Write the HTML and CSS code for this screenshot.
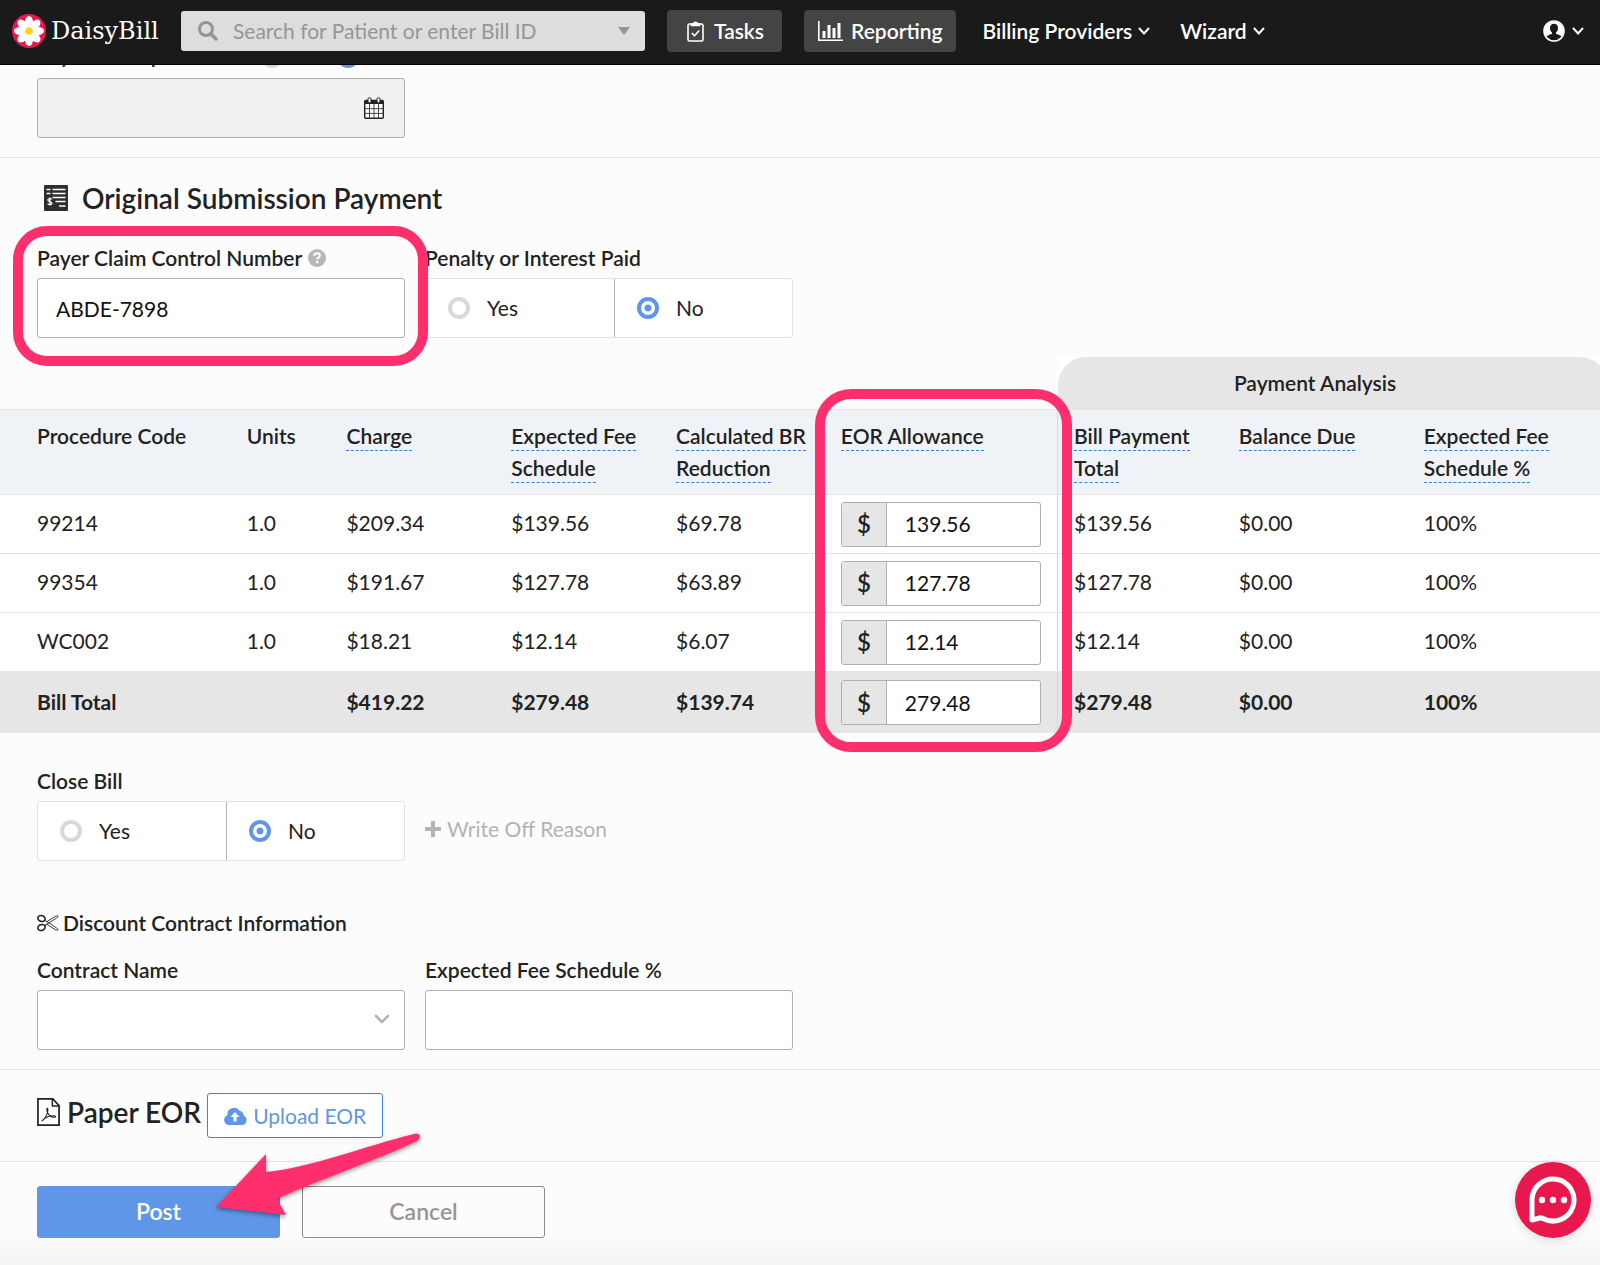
FILE: index.html
```html
<!DOCTYPE html>
<html lang="en">
<head>
    <meta charset="UTF-8">
    <meta name="viewport" content="width=device-width, initial-scale=1.0">
    <title>DaisyBill</title>
    <link rel="stylesheet" href="styles.css">
</head>
<body>

    <header class="navbar">
        <a class="brand" href="#">
            <svg class="brand-logo" viewBox="0 0 34 34" aria-hidden="true">
                <circle cx="17" cy="17" r="17" fill="#e8184c"/>
                <g fill="#fff">
                    <ellipse cx="17" cy="8" rx="4" ry="6"/>
                    <ellipse cx="17" cy="8" rx="4" ry="6" transform="rotate(45 17 17)"/>
                    <ellipse cx="17" cy="8" rx="4" ry="6" transform="rotate(90 17 17)"/>
                    <ellipse cx="17" cy="8" rx="4" ry="6" transform="rotate(135 17 17)"/>
                    <ellipse cx="17" cy="8" rx="4" ry="6" transform="rotate(180 17 17)"/>
                    <ellipse cx="17" cy="8" rx="4" ry="6" transform="rotate(225 17 17)"/>
                    <ellipse cx="17" cy="8" rx="4" ry="6" transform="rotate(270 17 17)"/>
                    <ellipse cx="17" cy="8" rx="4" ry="6" transform="rotate(315 17 17)"/>
                </g>
                <circle cx="17" cy="17" r="3.500" fill="#ffd400"/>
            </svg>
            <span>DaisyBill</span>
        </a>

        <div class="search">
            <svg class="search-icon" viewBox="0 0 20 20" aria-hidden="true">
                <circle cx="8" cy="8" r="6.500" fill="none" stroke="#949494" stroke-width="3"/>
                <path d="M13 13l5 5" stroke="#949494" stroke-width="3.400" stroke-linecap="round"/>
            </svg>
            <input type="text" placeholder="Search for Patient or enter Bill ID" aria-label="Search">
            <svg class="search-caret" viewBox="0 0 12 8" aria-hidden="true"><path d="M0 0h12L6 8z" fill="#949494"/></svg>
        </div>

        <nav class="menu">
            <a class="menu-button" href="#">
                <svg width="17" height="21" viewBox="0 0 17 21" fill="none" stroke="#fff" stroke-width="1.600" aria-hidden="true">
                    <rect x="1" y="3" width="15" height="17" rx="1.500"/>
                    <path d="M4.500 4.500V3h2.200a1.800 1.800 0 0 1 3.600 0h2.200v1.500z" fill="#fff"/>
                    <path d="M4.800 12l2.700 2.800 4.700-5.300"/>
                </svg>
                Tasks
            </a>
            <a class="menu-button" href="#">
                <svg width="25" height="20" viewBox="0 0 25 20" fill="#fff" aria-hidden="true">
                    <path d="M0 0h1.600v18.400H25V20H0zM4.500 10h3v7h-3zM9.500 4h3v13h-3zM14.500 7h3v10h-3zM19.500 2h3v15h-3z"/>
                </svg>
                Reporting
            </a>
            <a class="menu-link" href="#">
                Billing Providers
                <svg class="chevron" viewBox="0 0 12 8" aria-hidden="true"><path d="M1 1l5 5.500 5-5.500"/></svg>
            </a>
            <a class="menu-link" href="#">
                Wizard
                <svg class="chevron" viewBox="0 0 12 8" aria-hidden="true"><path d="M1 1l5 5.500 5-5.500"/></svg>
            </a>
        </nav>

        <button class="user-menu" type="button" aria-label="Account">
            <svg width="22" height="22" viewBox="0 0 22 22" aria-hidden="true">
                <circle cx="11" cy="11" r="10" fill="none" stroke="#fff" stroke-width="1.600"/>
                <path d="M1.500 11a9.500 9.500 0 0 1 19 0c0 2-.8 4-2 5.500-1.500-1.500-3.500-1.700-4.500-2.500h-6c-1 .8-3 1-4.500 2.500C2.300 15 1.500 13 1.500 11z" fill="#fff"/>
                <path d="M11 3.800c-2.600 0-4 1.800-4 4.200 0 2 .8 3.700 2 4.600v1.400c.5.900 3.500.9 4 0v-1.400c1.200-.9 2-2.600 2-4.600 0-2.400-1.400-4.200-4-4.200z" fill="#1a1a1a"/>
            </svg>
            <svg class="chevron" viewBox="0 0 12 8" aria-hidden="true"><path d="M1 1l5 5.500 5-5.500"/></svg>
        </button>
    </header>

    <main>
        <section class="section section-first">
            <div class="deposit-row">
                <label for="deposit-date">Payment Deposited</label>
                <label class="inline-radio"><input type="radio" name="deposited"> <span>Yes</span></label>
                <label class="inline-radio"><input type="radio" name="deposited" checked> <span>No</span></label>
            </div>
            <div class="date-box">
                <input class="text-input" id="deposit-date" type="text" disabled>
                <svg class="date-icon" viewBox="0 0 20 22" aria-hidden="true">
                    <rect x="0.700" y="3.500" width="18.600" height="17.800" rx="1" fill="#fff" stroke="#222" stroke-width="1.400"/>
                    <path d="M1 3.500h18V7H1z" fill="#222"/>
                    <path d="M5.500 7v14M10 7v14M14.500 7v14M1 11.700h18M1 16.400h18" stroke="#444" stroke-width="1"/>
                    <rect x="4" y="0.700" width="3" height="5" rx="1.400" fill="#fff" stroke="#222"/>
                    <rect x="13" y="0.700" width="3" height="5" rx="1.400" fill="#fff" stroke="#222"/>
                </svg>
            </div>
        </section>

        <section class="section section-payment">
            <h2 class="title">
                <svg width="24" height="26" viewBox="0 0 24 26" aria-hidden="true">
                    <rect width="24" height="26" rx="1" fill="#2e2e2e"/>
                    <path d="M2.500 4.500h4M8.500 4.500h13M2.500 8.500h4M8.500 8.500h13M8.500 12.500h13M11.500 16.500h10M15 21h6.500" stroke="#fff" stroke-width="1.700"/>
                    <path d="M7.800 14.300C7 13.200 3.800 13.300 3.800 15c0 2 4.200 1.200 4.200 3.200 0 1.700-3.400 1.800-4.400.5M5.900 12.500v8" fill="none" stroke="#fff" stroke-width="1.200"/>
                </svg>
                Original Submission Payment
            </h2>

            <div class="fields">
                <div class="field ringed">
                    <div class="label-row">
                        <label for="claim-number">Payer Claim Control Number</label>
                        <svg width="18" height="18" viewBox="0 0 18 18" aria-hidden="true">
                            <circle cx="9" cy="9" r="9" fill="#b8b8b8"/>
                            <path d="M6.200 6.800c0-3.600 5.700-3.300 5.700-.3 0 2-2.700 2-2.700 4" fill="none" stroke="#fff" stroke-width="2"/>
                            <rect x="8" y="12" width="2.300" height="2.300" fill="#fff"/>
                        </svg>
                    </div>
                    <input class="text-input" id="claim-number" type="text" value="ABDE-7898">
                </div>
                <fieldset class="field">
                    <legend>Penalty or Interest Paid</legend>
                    <div class="choice">
                        <label><input type="radio" name="penalty"> Yes</label>
                        <label><input type="radio" name="penalty" checked> No</label>
                    </div>
                </fieldset>
            </div>

            <table class="codes">
                <colgroup>
                    <col class="col-code">
                    <col class="col-units">
                    <col class="col-money">
                    <col class="col-money">
                    <col class="col-money">
                    <col class="col-eor">
                    <col class="col-money">
                    <col class="col-balance">
                    <col>
                </colgroup>
                <thead>
                    <tr class="group-row">
                        <td colspan="6"></td>
                        <th class="group" colspan="3" scope="colgroup">Payment Analysis</th>
                    </tr>
                    <tr class="head-row">
                        <th scope="col">Procedure Code</th>
                        <th scope="col">Units</th>
                        <th scope="col"><span class="tip">Charge</span></th>
                        <th scope="col"><span class="tip">Expected Fee<br>Schedule</span></th>
                        <th scope="col"><span class="tip">Calculated BR<br>Reduction</span></th>
                        <th class="eor" scope="col"><span class="tip">EOR Allowance</span></th>
                        <th scope="col"><span class="tip">Bill Payment<br>Total</span></th>
                        <th scope="col"><span class="tip">Balance Due</span></th>
                        <th scope="col"><span class="tip">Expected Fee<br>Schedule %</span></th>
                    </tr>
                </thead>
                <tbody>
                    <tr>
                        <td>99214</td>
                        <td>1.0</td>
                        <td>$209.34</td>
                        <td>$139.56</td>
                        <td>$69.78</td>
                        <td class="eor"><label class="money"><span>$</span><input type="text" value="139.56" aria-label="EOR allowance 99214"></label></td>
                        <td>$139.56</td>
                        <td>$0.00</td>
                        <td>100%</td>
                    </tr>
                    <tr>
                        <td>99354</td>
                        <td>1.0</td>
                        <td>$191.67</td>
                        <td>$127.78</td>
                        <td>$63.89</td>
                        <td class="eor"><label class="money"><span>$</span><input type="text" value="127.78" aria-label="EOR allowance 99354"></label></td>
                        <td>$127.78</td>
                        <td>$0.00</td>
                        <td>100%</td>
                    </tr>
                    <tr>
                        <td>WC002</td>
                        <td>1.0</td>
                        <td>$18.21</td>
                        <td>$12.14</td>
                        <td>$6.07</td>
                        <td class="eor"><label class="money"><span>$</span><input type="text" value="12.14" aria-label="EOR allowance WC002"></label></td>
                        <td>$12.14</td>
                        <td>$0.00</td>
                        <td>100%</td>
                    </tr>
                </tbody>
                <tfoot>
                    <tr>
                        <td>Bill Total</td>
                        <td></td>
                        <td>$419.22</td>
                        <td>$279.48</td>
                        <td>$139.74</td>
                        <td class="eor"><label class="money"><span>$</span><input type="text" value="279.48" aria-label="EOR allowance total"></label></td>
                        <td>$279.48</td>
                        <td>$0.00</td>
                        <td>100%</td>
                    </tr>
                </tfoot>
            </table>

            <div class="fields fields-close">
                <fieldset class="field">
                    <legend>Close Bill</legend>
                    <div class="choice">
                        <label><input type="radio" name="close"> Yes</label>
                        <label><input type="radio" name="close" checked> No</label>
                    </div>
                </fieldset>
                <a class="write-off" href="#">
                    <svg width="16" height="16" viewBox="0 0 16 16" aria-hidden="true"><path d="M6 0h4v6h6v4h-6v6H6v-6H0V6h6z" fill="#b3b3b3"/></svg>
                    Write Off Reason
                </a>
            </div>

            <h3 class="subtitle">
                <svg width="22" height="18" viewBox="0 0 22 18" fill="none" stroke="#222" aria-hidden="true">
                    <ellipse cx="4.500" cy="4.500" rx="3.700" ry="2.900" stroke-width="1.600" transform="rotate(20 4.500 4.500)"/>
                    <ellipse cx="4.500" cy="13.500" rx="3.700" ry="2.900" stroke-width="1.600" transform="rotate(-20 4.500 13.500)"/>
                    <path d="M8 6.500l3.500 2L19.500 14c1 .7 2 1.500 1.500 2-1 .4-2 0-3-.5L9.500 10 8 11.500M8 11.500L19.500 4c1-.7 2-1.500 1.500-2-1-.4-2 0-3 .5L9.500 8" stroke-width="0.900"/>
                </svg>
                Discount Contract Information
            </h3>

            <div class="fields">
                <div class="field">
                    <div class="label-row"><label for="contract">Contract Name</label></div>
                    <div class="select-box">
                        <select class="text-input" id="contract"><option></option></select>
                        <svg viewBox="0 0 16 10" aria-hidden="true"><path d="M2 2l6 6 6-6" fill="none" stroke="#b3b3b3" stroke-width="2.600" stroke-linecap="round"/></svg>
                    </div>
                </div>
                <div class="field">
                    <div class="label-row"><label for="fee-schedule">Expected Fee Schedule %</label></div>
                    <input class="text-input" id="fee-schedule" type="text">
                </div>
            </div>
        </section>

        <section class="section section-paper">
            <h2 class="title">
                <svg width="23" height="28" viewBox="0 0 24 30" preserveAspectRatio="none" fill="none" stroke="#222" aria-hidden="true">
                    <path d="M1 1h15.500L23 8v21H1z" stroke-width="1.800"/>
                    <path d="M16 1v7.500h7" stroke-width="1.500"/>
                    <path d="M5 24.500c2-1 4-3.500 5.500-7.500 1-3 1.200-6 .3-6-1 0-.8 2.500.5 5 1.500 3 4.500 5 7.500 4.500 1.500-.5.500-1.500-1.500-1.500-3 0-8 1.500-11 4.500-1 1-1.500 1.200-1.300 1z" stroke-width="1.100"/>
                </svg>
                Paper EOR
            </h2>
            <button class="btn-upload" type="button">
                <svg width="23" height="18" viewBox="0 0 23 18" aria-hidden="true">
                    <path d="M5 18a5 5 0 0 1-1.500-9.700A6.500 6.500 0 0 1 15.500 4a4 4 0 0 1 4 4.600A4.900 4.900 0 0 1 18 18z" fill="#5f96e8"/>
                    <path d="M11 5l4.500 5h-3v4.500h-3V10h-3z" fill="#fff"/>
                </svg>
                Upload EOR
            </button>
        </section>

        <div class="actions">
            <button class="btn-post" type="button">Post</button>
            <button class="btn-cancel" type="button">Cancel</button>
            <svg class="arrow" viewBox="0 0 206 84" aria-hidden="true">
                <path d="M1 74L51 21v18C95 35 150 13 199 1c6-2 8 4 3 7C160 28 105 46 62 66l9 16z" fill="#ff2e6d"/>
            </svg>
        </div>
    </main>

    <button class="chat" type="button" aria-label="Chat">
        <svg width="50" height="50" viewBox="0 0 50 50" aria-hidden="true">
            <path d="M4 45V25a21 21 0 1 1 11 18.500c-2-1-3-1-5 0z" fill="none" stroke="#fff" stroke-width="5" stroke-linejoin="round"/>
            <circle cx="14" cy="25" r="3.200" fill="#fff"/>
            <circle cx="25" cy="25" r="3.200" fill="#fff"/>
            <circle cx="36" cy="25" r="3.200" fill="#fff"/>
        </svg>
    </button>

</body>
</html>
```
FILE: styles.css
```css
* {
    box-sizing: border-box;
}

body {
    margin: 0;
    background-color: #fcfcfc;
    color: #222;
    font-family: Lato, "Liberation Sans", sans-serif;
    font-size: 21px;
    line-height: 24px;
    overflow-x: hidden;
}

a {
    text-decoration: none;
}

button,
input,
select {
    font: inherit;
}

svg {
    flex: none;
}

/* top bar */

.navbar {
    position: fixed;
    top: 0;
    left: 0;
    right: 0;
    z-index: 10;
    display: flex;
    align-items: center;
    height: 65px;
    padding: 0 16px 2px 12px;
    background-color: #1a1a1a;
    border-bottom: 1px solid #000;
}

.brand {
    display: flex;
    align-items: center;
    gap: 5px;
    width: 169px;
    color: #fff;
    font-family: "DejaVu Serif", serif;
    font-size: 24px;
}

.brand-logo {
    width: 34px;
    height: 34px;
}

.search {
    display: flex;
    align-items: center;
    gap: 15px;
    width: 464px;
    height: 40px;
    padding: 0 15px 0 17px;
    background-color: #ddd;
    border-radius: 3px;
}

.search-icon {
    width: 20px;
    height: 20px;
}

.search-caret {
    width: 12px;
    height: 8px;
}

.search input {
    flex: 1;
    min-width: 0;
    padding: 0;
    border: none;
    background: none;
}

.search input::placeholder {
    color: #969696;
}

.menu {
    display: flex;
    align-items: center;
    gap: 22px;
    margin-left: 22px;
    font-weight: 600;
}

.menu a {
    display: flex;
    align-items: center;
    color: #fff;
    white-space: nowrap;
}

.menu-button {
    gap: 8px;
    height: 42px;
    padding: 0 14px;
    background-color: #444;
    border-radius: 4px;
}

.menu-button:first-child {
    gap: 10px;
    padding: 0 18px 0 20px;
}

.menu-link {
    gap: 6px;
    padding: 0 4px;
}

.chevron {
    width: 12px;
    height: 8px;
    fill: none;
    stroke: #fff;
    stroke-width: 2;
}

.user-menu {
    display: flex;
    align-items: center;
    gap: 7px;
    margin-left: auto;
    padding: 0;
    border: none;
    background: none;
}

/* sections */

.section {
    border-bottom: 1px solid #e3e3e3;
}

.section-first {
    padding: 46px 37px 19px;
}

.section-payment {
    padding: 24px 0 19px;
}

.section-paper {
    display: flex;
    align-items: flex-start;
    gap: 6px;
    padding: 23px 37px;
}

.title {
    display: flex;
    align-items: center;
    gap: 14px;
    margin: 0;
    font-size: 28px;
    font-weight: 600;
    line-height: 32px;
}

.section-payment .title {
    padding: 0 44px;
    margin-bottom: 32px;
}

.section-paper .title {
    gap: 7px;
    line-height: 38px;
}

.subtitle {
    display: flex;
    align-items: center;
    gap: 4px;
    margin: 50px 37px 23px;
    font-size: 21px;
    font-weight: 600;
}

/* form fields */

.fields {
    display: flex;
    gap: 20px;
    padding: 0 37px;
}

.field {
    width: 368px;
    min-width: 0;
    margin: 0;
    padding: 0;
    border: none;
}

.field legend,
.label-row {
    display: flex;
    align-items: center;
    gap: 6px;
    margin-bottom: 8px;
    padding: 0;
    font-weight: 600;
    white-space: nowrap;
}

.text-input {
    display: block;
    width: 100%;
    height: 60px;
    padding: 0 18px;
    border: 1px solid #b0b0b0;
    border-radius: 3px;
    background-color: #fff;
    color: #111;
}

.text-input:disabled {
    background-color: #f1f1f1;
}

input[type="radio"] {
    appearance: none;
    width: 22px;
    height: 22px;
    margin: 0;
    border: 4px solid #d8d8d8;
    border-radius: 50%;
    background-color: #fff;
}

input[type="radio"]:checked {
    border-color: #5f96e8;
    background: radial-gradient(circle, #5f96e8 3px, #fff 4px);
}

.deposit-row {
    display: flex;
    align-items: flex-start;
    height: 24px;
    margin-bottom: 8px;
    line-height: 18px;
}

.deposit-row label:first-child {
    width: 224px;
    font-weight: 600;
}

.inline-radio {
    display: flex;
    align-items: flex-start;
    gap: 12px;
    width: 76px;
}

.date-box,
.select-box {
    position: relative;
    width: 368px;
}

.date-icon {
    position: absolute;
    top: 19px;
    right: 21px;
    width: 20px;
    height: 22px;
}

.select-box select {
    appearance: none;
}

.select-box svg {
    position: absolute;
    top: 24px;
    right: 15px;
    width: 16px;
    height: 10px;
}

.choice {
    display: flex;
    height: 60px;
    background-color: #fff;
    border: 1px solid #e3e3e3;
    border-radius: 3px;
}

.choice label {
    display: flex;
    align-items: center;
    gap: 17px;
    flex: 1;
    padding-left: 22px;
}

.choice label:first-child {
    flex: none;
    width: 189px;
    border-right: 1px solid #b0b0b0;
}

.fields-close {
    align-items: flex-end;
    margin-top: 36px;
}

.write-off {
    display: flex;
    align-items: center;
    gap: 6px;
    height: 60px;
    padding-bottom: 4px;
    color: #b3b3b3;
}

/* highlight ring */

.ringed,
.head-row .eor {
    position: relative;
}

.ringed::after,
.head-row .eor::after {
    content: "";
    position: absolute;
    z-index: 2;
    border: 10px solid #ff2e6d;
    pointer-events: none;
}

.ringed::after {
    inset: -20px -23px -28px -24px;
    border-radius: 34px;
}

.head-row .eor::after {
    top: -21px;
    left: -10px;
    right: -15px;
    height: 343px;
    border-radius: 36px;
}

/* procedure table */

.codes {
    width: calc(100% + 8px);
    margin-top: 19px;
    table-layout: fixed;
    border-collapse: separate;
    border-spacing: 0;
    background-color: #fff;
}

.col-code {
    width: 14.35%;
}

.col-units {
    width: 6.2%;
}

.col-money {
    width: 10.25%;
}

.col-eor {
    width: 14.5%;
}

.col-balance {
    width: 11.5%;
}

.codes th,
.codes td {
    padding: 0 0 0 16px;
    text-align: left;
    white-space: nowrap;
}

.codes th {
    font-weight: 600;
}

.group-row,
.codes .group-row td {
    background-color: #fcfcfc;
}

.codes .group {
    height: 52px;
    padding: 0 36px 0 0;
    background-color: #e6e6e6;
    border-radius: 28px 28px 0 0;
    text-align: center;
}

.codes .head-row th {
    padding-top: 10px;
    padding-bottom: 10px;
    background-color: #eff2f7;
    border-top: 1px solid #e3e3e3;
    border-bottom: 1px solid #e3e3e3;
    line-height: 32px;
    vertical-align: top;
}

.tip {
    padding-bottom: 2px;
    border-bottom: 1px dashed #2d7ff0;
}

.codes tbody td {
    height: 59px;
    border-bottom: 1px solid #e3e3e3;
}

.codes tfoot td {
    height: 61px;
    background-color: #e6e6e6;
    font-weight: 700;
}

.codes td:not(.eor) {
    padding-bottom: 2px;
}

.codes tr > :first-child:not([colspan]) {
    padding-left: 37px;
}

.codes .eor {
    border-right: 1px solid #d8d8d8;
}

.money {
    display: flex;
    width: 200px;
    height: 45px;
    border: 1px solid #b0b0b0;
    border-radius: 3px;
    background-color: #fff;
    font-weight: 400;
    overflow: hidden;
}

.money span {
    display: flex;
    align-items: center;
    justify-content: center;
    width: 45px;
    background-color: #e6e6e6;
    border-right: 1px solid #b0b0b0;
    font-size: 24px;
    font-weight: 600;
}

.money input {
    flex: 1;
    min-width: 0;
    padding: 0 18px;
    border: none;
    background: none;
    color: #111;
}

/* buttons */

.btn-upload {
    display: flex;
    align-items: center;
    gap: 6px;
    height: 45px;
    padding: 0 16px;
    border: 1px solid #3d82e6;
    border-radius: 3px;
    background-color: #fff;
    color: #5f96e8;
}

.actions {
    position: relative;
    display: flex;
    gap: 22px;
    padding: 24px 37px 27px;
    background: linear-gradient(#fcfcfc 70%, #f3f3f3);
}

.btn-post,
.btn-cancel {
    width: 243px;
    height: 52px;
    padding: 0 0 2px;
    border: 1px solid #5f96e8;
    border-radius: 3px;
    background-color: #5f96e8;
    color: #fff;
    font-size: 23px;
    font-weight: 600;
}

.btn-cancel {
    border-color: #8c8c8c;
    background-color: #fcfcfc;
    color: #969696;
}

.arrow {
    position: absolute;
    top: -29px;
    left: 215px;
    width: 206px;
    height: 84px;
    filter: drop-shadow(0 2px 2px rgba(0, 0, 0, 0.4));
}

.chat {
    position: fixed;
    right: 9px;
    bottom: 27px;
    display: flex;
    align-items: center;
    justify-content: center;
    width: 76px;
    height: 76px;
    padding: 0;
    border: none;
    border-radius: 50%;
    background-color: #e8184c;
    box-shadow: 0 2px 10px rgba(0, 0, 0, 0.15);
}
```
